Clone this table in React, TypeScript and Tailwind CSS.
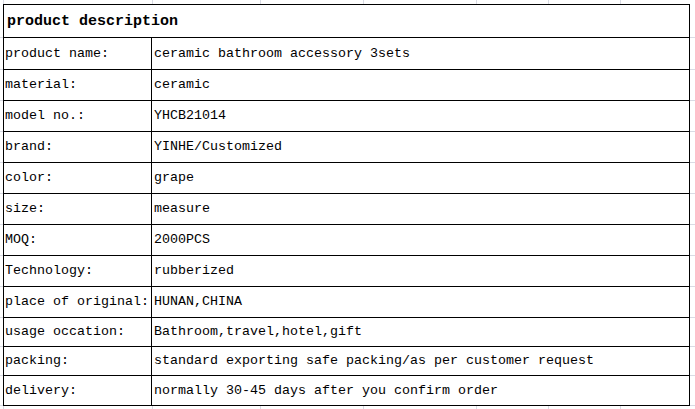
const rows: { label: string; value: string; h: string }[] = [
  { label: "product name:", value: "ceramic bathroom accessory 3sets", h: "h-[32px]" },
  { label: "material:", value: "ceramic", h: "h-[31px]" },
  { label: "model no.:", value: "YHCB21014", h: "h-[31px]" },
  { label: "brand:", value: "YINHE/Customized", h: "h-[31px]" },
  { label: "color:", value: "grape", h: "h-[31px]" },
  { label: "size:", value: "measure", h: "h-[31px]" },
  { label: "MOQ:", value: "2000PCS", h: "h-[31px]" },
  { label: "Technology:", value: "rubberized", h: "h-[31px]" },
  { label: "place of original:", value: "HUNAN,CHINA", h: "h-[31px]" },
  { label: "usage occation:", value: "Bathroom,travel,hotel,gift", h: "h-[29px]" },
  { label: "packing:", value: "standard exporting safe packing/as per customer request", h: "h-[29px]" },
  { label: "delivery:", value: "normally 30-45 days after you confirm order", h: "h-[29px]" },
];

export default function App() {
  return (
    <div
      className="w-[695px] h-[409px] overflow-hidden bg-white pt-[4px] pl-[3px] text-black bg-no-repeat [background-image:linear-gradient(#d9dbe4,#d9dbe4),linear-gradient(#d9dbe4,#d9dbe4),linear-gradient(#d9dbe4,#d9dbe4),linear-gradient(#d9dbe4,#d9dbe4),linear-gradient(#d9dbe4,#d9dbe4),linear-gradient(#d9dbe4,#d9dbe4),linear-gradient(#d9dbe4,#d9dbe4),linear-gradient(#d9dbe4,#d9dbe4),linear-gradient(#d9dbe4,#d9dbe4),linear-gradient(#d9dbe4,#d9dbe4),linear-gradient(#d9dbe4,#d9dbe4),linear-gradient(#d9dbe4,#d9dbe4),linear-gradient(#d9dbe4,#d9dbe4),linear-gradient(#d9dbe4,#d9dbe4),linear-gradient(#d9dbe4,#d9dbe4),linear-gradient(#d9dbe4,#d9dbe4),linear-gradient(#d9dbe4,#d9dbe4),linear-gradient(#d9dbe4,#d9dbe4),linear-gradient(#d9dbe4,#d9dbe4),linear-gradient(#d9dbe4,#d9dbe4)] [background-size:1px_100%,1px_100%,1px_100%,1px_100%,1px_100%,1px_100%,1px_100%,100%_1px,100%_1px,100%_1px,100%_1px,100%_1px,100%_1px,100%_1px,100%_1px,100%_1px,100%_1px,100%_1px,100%_1px,100%_1px] [background-position:3px_0,152px_0,260px_0,363px_0,476px_0,548px_0,620px_0,0_37px,0_69px,0_100px,0_131px,0_162px,0_193px,0_224px,0_255px,0_286px,0_317px,0_346px,0_375px,0_405px]"
      style={{ fontFamily: '"Liberation Mono", "DejaVu Sans Mono", monospace' }}
    >
      <div className="w-[687px] border border-black bg-white">
        {/* header */}
        <div className="h-[33px] border-b border-black flex items-center pl-[3px] pt-[2px] text-[15px] font-bold">
          product description
        </div>

        {rows.map((r, i) => (
          <div
            key={r.label}
            className={`flex ${r.h} ${i < rows.length - 1 ? "border-b border-black" : ""}`}
          >
            <div className="w-[148px] shrink-0 border-r border-black flex items-center pl-px text-[13.33px] whitespace-nowrap">
              {r.label}
            </div>
            <div className="flex-1 flex items-center pl-[2px] text-[13.33px] whitespace-nowrap">
              {r.value}
            </div>
          </div>
        ))}
      </div>
    </div>
  );
}
